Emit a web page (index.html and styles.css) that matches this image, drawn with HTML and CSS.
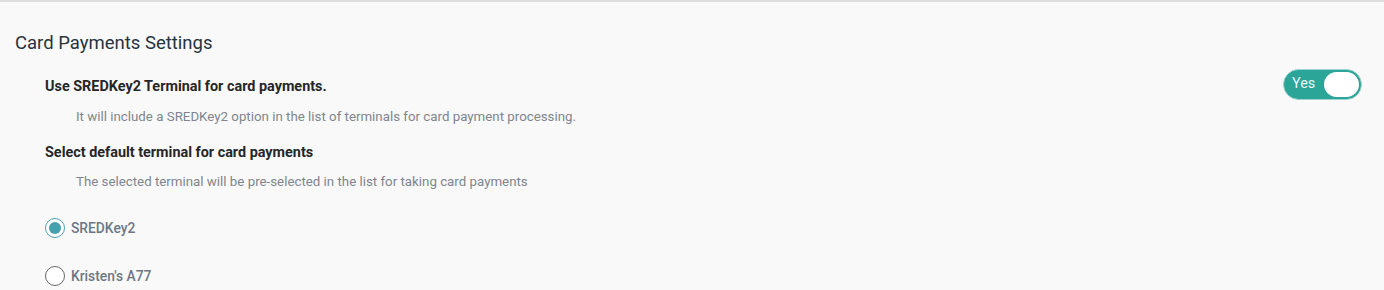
FILE: index.html
```html
<!DOCTYPE html>
<html>
<head>
<meta charset="utf-8">
<link rel="stylesheet" href="styles.css">
</head>
<body>
<div class="page">
  <h2 class="title">Card Payments Settings</h2>
  <div class="setting first">
    <div class="row">
      <div class="label">Use SREDKey2 Terminal for card payments.</div>
      <div class="toggle"><span class="toggle-text">Yes</span><span class="knob"></span></div>
    </div>
    <div class="desc">It will include a SREDKey2 option in the list of terminals for card payment processing.</div>
  </div>
  <div class="setting second">
    <div class="label">Select default terminal for card payments</div>
    <div class="desc">The selected terminal will be pre-selected in the list for taking card payments</div>
    <div class="options">
      <label class="option"><span class="radio checked"></span><span class="opt-text">SREDKey2</span></label>
      <label class="option"><span class="radio"></span><span class="opt-text">Kristen's A77</span></label>
    </div>
  </div>
</div>
</body>
</html>
```

FILE: styles.css
```css
html, body {
  margin: 0;
  padding: 0;
  background: #f9f9f9;
  font-family: Roboto, "Liberation Sans", sans-serif;
}
.page {
  border-top: 2px solid #dedede;
  padding: 0 22px 0 15px;
}
.title {
  margin: 0;
  padding-top: 30px;
  font-size: 18.5px;
  font-weight: 400;
  line-height: 22px;
  color: #263440;
}
.setting {
  padding-left: 30px;
}
.row {
  display: flex;
  justify-content: space-between;
  align-items: center;
  height: 31px;
  margin-top: 15px;
}
.row .label {
  margin-top: 4px;
}
.label {
  font-size: 14.4px;
  font-weight: 700;
  color: #262626;
  line-height: 20px;
}
.second {
  margin-top: 17px;
}
.desc {
  font-size: 13.3px;
  color: #80858d;
  padding-left: 31px;
  line-height: 18px;
  margin-top: 10px;
}
.first .desc {
  margin-top: 8px;
}
.toggle {
  width: 79px;
  height: 31px;
  box-sizing: border-box;
  border-radius: 16px;
  background: #2aa597;
  border: 1px solid #9ed4cd;
  display: flex;
  align-items: center;
  justify-content: space-between;
  padding: 0 2px 0 8px;
}
.toggle-text {
  color: #e8f6f4;
  font-size: 14.4px;
  margin-top: -2px;
}
.knob {
  width: 35px;
  height: 25px;
  border-radius: 13px;
  background: #fff;
}
.options {
  display: flex;
  flex-direction: column;
  gap: 28px;
  margin-top: 27px;
}
.option {
  display: flex;
  align-items: center;
  gap: 6px;
  height: 20px;
}
.radio {
  width: 20px;
  height: 20px;
  box-sizing: border-box;
  border-radius: 50%;
  border: 1.5px solid #666;
  background: #fff;
  display: flex;
  align-items: center;
  justify-content: center;
}
.radio.checked {
  border-color: #4aa3b0;
}
.radio.checked::after {
  content: "";
  width: 12px;
  height: 12px;
  border-radius: 50%;
  background: #45a0ad;
}
.opt-text {
  font-size: 13.8px;
  font-weight: 500;
  color: #6c7785;
}
```
